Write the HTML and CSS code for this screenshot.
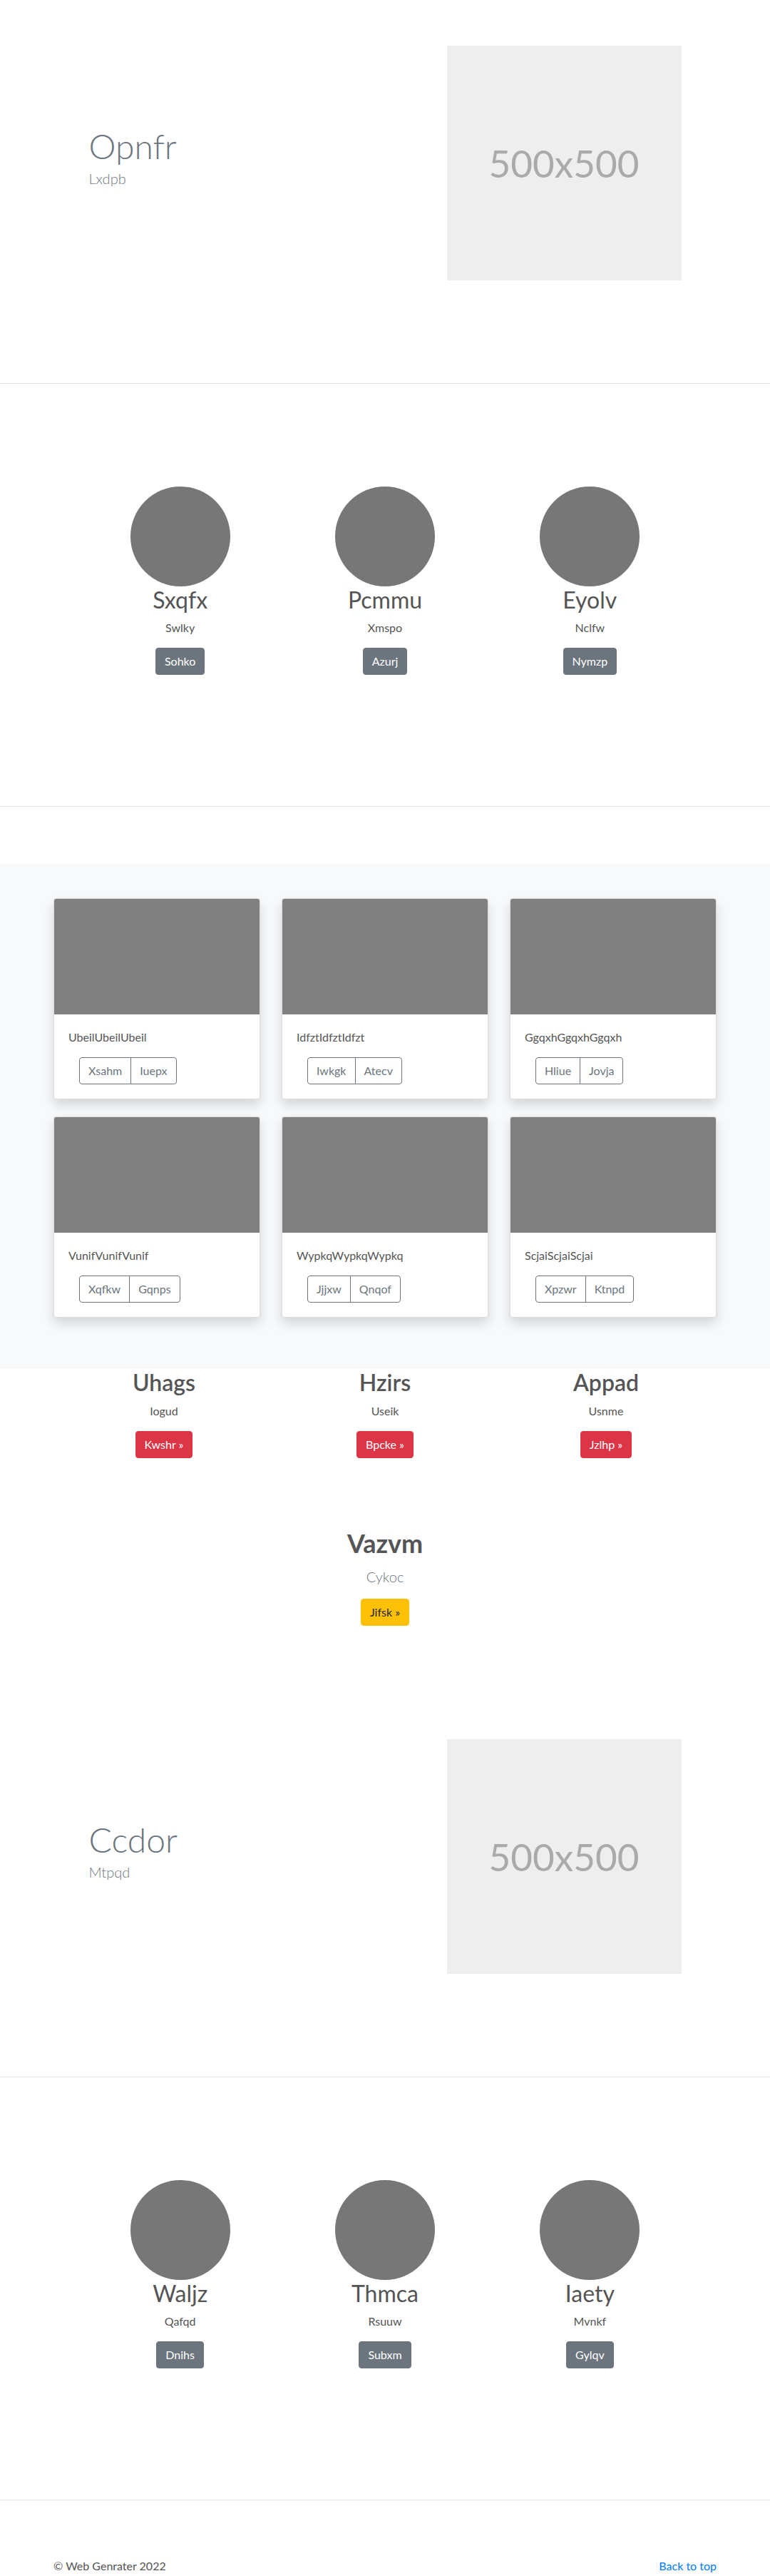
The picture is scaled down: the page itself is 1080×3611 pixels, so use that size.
FILE: index.html
```html
<!DOCTYPE html>
<html lang="en">

<head>
    <meta charset="UTF-8">
    <meta name="viewport" content="width=device-width, initial-scale=1.0">
    <title>Web Genrater</title>
    <link rel="stylesheet" href="styles.css">
</head>

<body>

    <section class="hero">
        <div class="hero-inner">
            <div class="hero-text">
                <h1>Opnfr</h1>
                <p class="lead">Lxdpb</p>
            </div>
            <div class="placeholder">500x500</div>
        </div>
    </section>

    <hr class="divider">

    <section class="team">
        <div class="team-row">
            <div class="member">
                <div class="avatar"></div>
                <h2>Sxqfx</h2>
                <p>Swlky</p>
                <p><a class="btn btn-secondary" href="#">Sohko</a></p>
            </div>
            <div class="member">
                <div class="avatar"></div>
                <h2>Pcmmu</h2>
                <p>Xmspo</p>
                <p><a class="btn btn-secondary" href="#">Azurj</a></p>
            </div>
            <div class="member">
                <div class="avatar"></div>
                <h2>Eyolv</h2>
                <p>Nclfw</p>
                <p><a class="btn btn-secondary" href="#">Nymzp</a></p>
            </div>
        </div>
    </section>

    <hr class="divider">

    <section class="album">
        <div class="container card-grid">
            <div class="card">
                <div class="thumb"></div>
                <div class="card-body">
                    <p class="card-text">UbeilUbeilUbeil</p>
                    <div class="btn-group">
                        <a class="btn btn-outline" href="#">Xsahm</a>
                        <a class="btn btn-outline" href="#">Iuepx</a>
                    </div>
                </div>
            </div>
            <div class="card">
                <div class="thumb"></div>
                <div class="card-body">
                    <p class="card-text">IdfztIdfztIdfzt</p>
                    <div class="btn-group">
                        <a class="btn btn-outline" href="#">Iwkgk</a>
                        <a class="btn btn-outline" href="#">Atecv</a>
                    </div>
                </div>
            </div>
            <div class="card">
                <div class="thumb"></div>
                <div class="card-body">
                    <p class="card-text">GgqxhGgqxhGgqxh</p>
                    <div class="btn-group">
                        <a class="btn btn-outline" href="#">Hliue</a>
                        <a class="btn btn-outline" href="#">Jovja</a>
                    </div>
                </div>
            </div>
            <div class="card">
                <div class="thumb"></div>
                <div class="card-body">
                    <p class="card-text">VunifVunifVunif</p>
                    <div class="btn-group">
                        <a class="btn btn-outline" href="#">Xqfkw</a>
                        <a class="btn btn-outline" href="#">Gqnps</a>
                    </div>
                </div>
            </div>
            <div class="card">
                <div class="thumb"></div>
                <div class="card-body">
                    <p class="card-text">WypkqWypkqWypkq</p>
                    <div class="btn-group">
                        <a class="btn btn-outline" href="#">Jjjxw</a>
                        <a class="btn btn-outline" href="#">Qnqof</a>
                    </div>
                </div>
            </div>
            <div class="card">
                <div class="thumb"></div>
                <div class="card-body">
                    <p class="card-text">ScjaiScjaiScjai</p>
                    <div class="btn-group">
                        <a class="btn btn-outline" href="#">Xpzwr</a>
                        <a class="btn btn-outline" href="#">Ktnpd</a>
                    </div>
                </div>
            </div>
        </div>
    </section>

    <section class="container features">
        <div class="feature">
            <h2>Uhags</h2>
            <p>Iogud</p>
            <p><a class="btn btn-danger" href="#">Kwshr &raquo;</a></p>
        </div>
        <div class="feature">
            <h2>Hzirs</h2>
            <p>Useik</p>
            <p><a class="btn btn-danger" href="#">Bpcke &raquo;</a></p>
        </div>
        <div class="feature">
            <h2>Appad</h2>
            <p>Usnme</p>
            <p><a class="btn btn-danger" href="#">Jzlhp &raquo;</a></p>
        </div>
    </section>

    <section class="cta">
        <h2>Vazvm</h2>
        <p class="lead">Cykoc</p>
        <p><a class="btn btn-warning" href="#">Jifsk &raquo;</a></p>
    </section>

    <section class="hero">
        <div class="hero-inner">
            <div class="hero-text">
                <h1>Ccdor</h1>
                <p class="lead">Mtpqd</p>
            </div>
            <div class="placeholder">500x500</div>
        </div>
    </section>

    <hr class="divider">

    <section class="team">
        <div class="team-row">
            <div class="member">
                <div class="avatar"></div>
                <h2>Waljz</h2>
                <p>Qafqd</p>
                <p><a class="btn btn-secondary" href="#">Dnihs</a></p>
            </div>
            <div class="member">
                <div class="avatar"></div>
                <h2>Thmca</h2>
                <p>Rsuuw</p>
                <p><a class="btn btn-secondary" href="#">Subxm</a></p>
            </div>
            <div class="member">
                <div class="avatar"></div>
                <h2>Iaety</h2>
                <p>Mvnkf</p>
                <p><a class="btn btn-secondary" href="#">Gylqv</a></p>
            </div>
        </div>
    </section>

    <hr class="divider">

    <footer class="container footer">
        <p class="to-top"><a href="#">Back to top</a></p>
        <p>&copy; Web Genrater 2022</p>
    </footer>

</body>

</html>
```

FILE: styles.css
```css
* {
    box-sizing: border-box;
}

body {
    margin: 0;
    font-family: Lato, "Open Sans", sans-serif;
    font-size: 16px;
    line-height: 1.5;
    color: #555;
    background-color: #fff;
}

p {
    margin: 0 0 16px;
}

a {
    color: #007bff;
    text-decoration: none;
}

.container {
    width: 960px;
    margin: 0 auto;
    padding: 0 15px;
}

.lead {
    font-size: 20px;
    line-height: 30px;
    font-weight: 300;
}

/* buttons */
.btn {
    display: inline-block;
    padding: 6px 12px;
    font-size: 16px;
    line-height: 24px;
    border: 1px solid transparent;
    border-radius: 4px;
    text-align: center;
    vertical-align: middle;
}

.btn-secondary {
    background-color: #6c757d;
    border-color: #6c757d;
    color: #fff;
}

.btn-danger {
    background-color: #dc3545;
    border-color: #dc3545;
    color: #fff;
}

.btn-warning {
    background-color: #ffc107;
    border-color: #ffc107;
    color: #212529;
}

.btn-outline {
    border-color: #6c757d;
    color: #6c757d;
}

.btn-group {
    display: inline-flex;
    margin-left: 15px;
}

.btn-group .btn + .btn {
    margin-left: -1px;
}

.btn-group .btn:first-child {
    border-top-right-radius: 0;
    border-bottom-right-radius: 0;
}

.btn-group .btn:last-child {
    border-top-left-radius: 0;
    border-bottom-left-radius: 0;
}

/* hero */
.hero {
    padding: 64px 0;
}

.hero-inner {
    width: 831px;
    margin: 0 auto;
    display: flex;
    justify-content: space-between;
    align-items: center;
}

.hero-text h1 {
    margin: 0 0 2px;
    font-size: 48px;
    line-height: 1.2;
    font-weight: 300;
    color: #6c757d;
}

.hero-text .lead {
    color: #6c757d;
}

.placeholder {
    width: 329px;
    height: 329px;
    background-color: #eee;
    color: #aaa;
    font-size: 53px;
    display: flex;
    justify-content: center;
    align-items: center;
}

.divider {
    margin: 80px 0;
    border: 0;
    border-top: 1px solid rgba(0, 0, 0, 0.1);
}

/* team */
.team {
    padding: 64px 0;
}

.team-row {
    width: 862px;
    margin: 0 auto;
    display: grid;
    grid-template-columns: repeat(3, 1fr);
}

.member {
    text-align: center;
    margin-bottom: 24px;
}

.avatar {
    width: 140px;
    height: 140px;
    margin: 0 auto;
    border-radius: 50%;
    background-color: #777;
}

.member h2 {
    margin: 0 0 8px;
    font-size: 32px;
    line-height: 1.2;
    font-weight: 400;
}

/* album */
.album {
    background-color: #f8f9fa;
    padding: 48px 0;
}

.card-grid {
    display: grid;
    grid-template-columns: repeat(3, 1fr);
    column-gap: 30px;
}

.card {
    margin-bottom: 24px;
    background-color: #fff;
    border: 1px solid rgba(0, 0, 0, 0.125);
    border-radius: 4px;
    overflow: hidden;
    box-shadow: 0 8px 16px rgba(0, 0, 0, 0.15);
}

.thumb {
    height: 162px;
    background-color: #808080;
}

.card-body {
    padding: 20px;
}

/* features */
.features {
    display: grid;
    grid-template-columns: repeat(3, 1fr);
    text-align: center;
}

.feature h2 {
    margin: 0 0 8px;
    font-size: 32px;
    line-height: 1.2;
    font-weight: 600;
}

/* call to action */
.cta {
    padding: 82px 0 79px;
    text-align: center;
}

.cta h2 {
    margin: 0 0 10px;
    font-size: 36px;
    line-height: 1.2;
    font-weight: 700;
}

.cta .lead {
    color: #6c757d;
}

/* footer */
.to-top {
    float: right;
}
```
